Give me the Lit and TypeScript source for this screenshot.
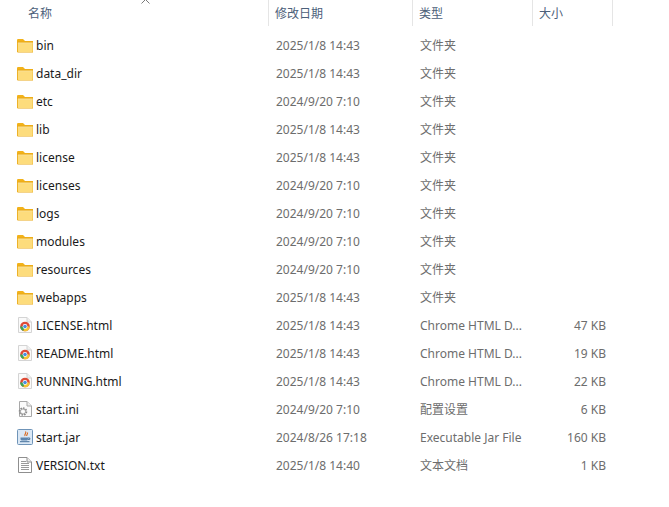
import { LitElement, html, css, svg } from "lit";
import { customElement } from "lit/decorators.js";

type Kind = "folder" | "chrome" | "ini" | "jar" | "txt";
interface Row { name: string; date: string; type: string; size: string; kind: Kind; }

const f = (name: string, date: string): Row => ({ name, date, type: "文件夹", size: "", kind: "folder" });
const rows: Row[] = [
  f("bin", "2025/1/8 14:43"),
  f("data_dir", "2025/1/8 14:43"),
  f("etc", "2024/9/20 7:10"),
  f("lib", "2025/1/8 14:43"),
  f("license", "2025/1/8 14:43"),
  f("licenses", "2024/9/20 7:10"),
  f("logs", "2024/9/20 7:10"),
  f("modules", "2024/9/20 7:10"),
  f("resources", "2024/9/20 7:10"),
  f("webapps", "2025/1/8 14:43"),
  { name: "LICENSE.html", date: "2025/1/8 14:43", type: "Chrome HTML D...", size: "47 KB", kind: "chrome" },
  { name: "README.html", date: "2025/1/8 14:43", type: "Chrome HTML D...", size: "19 KB", kind: "chrome" },
  { name: "RUNNING.html", date: "2025/1/8 14:43", type: "Chrome HTML D...", size: "22 KB", kind: "chrome" },
  { name: "start.ini", date: "2024/9/20 7:10", type: "配置设置", size: "6 KB", kind: "ini" },
  { name: "start.jar", date: "2024/8/26 17:18", type: "Executable Jar File", size: "160 KB", kind: "jar" },
  { name: "VERSION.txt", date: "2025/1/8 14:40", type: "文本文档", size: "1 KB", kind: "txt" },
];

const page = svg`<path d="M1.5 .5H10L14.5 5V15.5H1.5Z" fill="#fafafa" stroke="#d4d4d4"/><path d="M10 .5V5H14.5" fill="#efefef" stroke="#d4d4d4"/>`;

const icons: Record<Kind, unknown> = {
  folder: svg`
    <path d="M0 3.5C0 2.4.6 2 1.4 2H6L8 4H16V6H0Z" fill="#f2b21a"/>
    <rect x="0" y="4.5" width="16.5" height="11" rx="1" fill="#e9a815"/>
    <path d="M.8 6.5H15.7V14.2C15.7 14.8 15.3 15 14.8 15H1.7C1.2 15 .8 14.8 .8 14.2Z" fill="#fddc7c"/>
    <path d="M.8 5.6H15.7V6.6H.8Z" fill="#fff0b8"/>`,
  chrome: svg`${page}
    <circle cx="8" cy="9.5" r="4.8" fill="#de4b37"/>
    <path d="M8 9.5 3.2 9.5A4.8 4.8 0 0 0 6.4 14Z" fill="#3aa757"/>
    <path d="M8 9.5 6.4 14A4.8 4.8 0 0 0 12.8 9.5Z" fill="#f4c534"/>
    <circle cx="8" cy="9.5" r="2.4" fill="#fff"/><circle cx="8" cy="9.5" r="1.8" fill="#4a8fe0"/>`,
  ini: svg`<path d="M2.5 .5H10L14.5 5V15.5H2.5Z" fill="#fbfbfb" stroke="#a8a8a8"/><path d="M10 .5V5H14.5" fill="#eee" stroke="#a8a8a8"/>
    <circle cx="6" cy="10.5" r="3.4" fill="none" stroke="#8c8c8c" stroke-width="1.8" stroke-dasharray="1.6 1"/>
    <circle cx="6" cy="10.5" r="2.6" fill="none" stroke="#a0a0a0" stroke-width="1"/>
    <circle cx="6" cy="10.5" r=".9" fill="#fff"/>`,
  jar: svg`<rect x=".5" y=".5" width="15" height="15" rx="1" fill="#dbe8f5" stroke="#6f94b8"/>
    <path d="M8.5 2.5C10 4 7 5 8 7M10.5 3.5C11 5 9.5 5.5 9.7 7" fill="none" stroke="#d9691e" stroke-width="1.1"/>
    <path d="M3.5 8.5H11V10C11 11 10 11.5 9 11.5H5.5C4.5 11.5 3.5 11 3.5 10Z" fill="#5c86b0"/>
    <path d="M11 9H12.8V10.4H11M3 12.7H12.5" fill="none" stroke="#45719c" stroke-width="1"/>`,
  txt: svg`<path d="M1.5 .5H10L14.5 5V15.5H1.5Z" fill="#fff" stroke="#8f8f8f"/><path d="M10 .5V5H14.5" fill="#eee" stroke="#8f8f8f"/>
    <path d="M4 4.5H9M4 6.5H12M4 8.5H12M4 10.5H12M4 12.5H12" stroke="#9a9a9a" stroke-width="1"/>`,
};

@customElement("app-root")
export class AppRoot extends LitElement {
  static styles = css`
    :host {
      display: block;
      width: 669px;
      height: 507px;
      background: #fff;
      overflow: hidden;
      font-family: "Noto Sans", "Noto Sans CJK SC", sans-serif;
      font-size: 12px;
    }
    .head, .row {
      display: grid;
      grid-template-columns: 269px 144px 120px 80px;
    }
    .head { height: 26px; position: relative; color: #4c607a; }
    .hc {
      border-right: 1px solid #e5e5e5;
      display: flex;
      align-items: center;
      padding-left: 6px;
      padding-bottom: 1px;
    }
    .hc:first-child { padding-left: 28px; border-right: 0; }
    .hc + .hc { border-left: 1px solid #e5e5e5; border-right: 0; margin-left: -1px; }
    .hc:last-of-type { border-right: 1px solid #e5e5e5; }
    .sort { position: absolute; left: 141px; top: -1px; width: 9px; height: 5px; }
    .body { padding-top: 5px; display: flex; flex-direction: column; }
    .row { height: 28px; align-items: center; color: #6d6d6d; }
    .name { display: flex; align-items: center; gap: 3px; padding-left: 17px; color: #1a1a1a; }
    .name svg { width: 16px; height: 16px; flex: none; }
    .date { padding-left: 7px; }
    .type { padding-left: 7px; white-space: nowrap; }
    .size { text-align: right; padding-right: 7px; }
  `;

  render() {
    return html`
      <div class="head">
        <div class="hc">名称</div>
        <div class="hc">修改日期</div>
        <div class="hc">类型</div>
        <div class="hc">大小</div>
        <svg class="sort" viewBox="0 0 9 5"><path d="M.5 4.5 4.5 .5 8.5 4.5" fill="none" stroke="#7a7a7a"/></svg>
      </div>
      <div class="body">
        ${rows.map(r => html`
          <div class="row">
            <div class="name"><svg viewBox="0 0 16 16">${icons[r.kind]}</svg><span>${r.name}</span></div>
            <div class="date">${r.date}</div>
            <div class="type">${r.type}</div>
            <div class="size">${r.size}</div>
          </div>`)}
      </div>
    `;
  }
}
